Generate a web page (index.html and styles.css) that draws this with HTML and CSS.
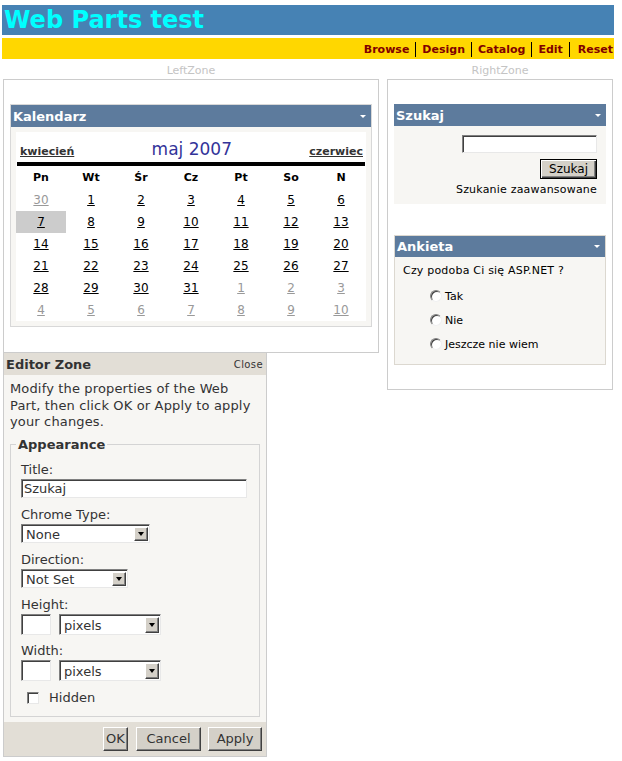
FILE: index.html
```html
<!DOCTYPE html>
<html>
<head>
<meta charset="utf-8">
<title>Web Parts test</title>
<link rel="stylesheet" href="styles.css">
</head>
<body>
<div class="title-bar"><h1>Web Parts test</h1></div>
<div class="menu-bar">
  <nav class="menu"><a>Browse</a><a>Design</a><a>Catalog</a><a>Edit</a><a>Reset</a></nav>
</div>
<div class="main">
  <div class="col-left">
    <div class="zone-label">LeftZone</div>
    <div class="zone">
      <div class="part part-bordered">
        <div class="part-head"><span>Kalendarz</span><span class="arrow"></span></div>
        <div class="cal-body">
          <div class="cal">
            <div class="cal-title"><a>kwiecień</a><span class="cal-month">maj 2007</span><a>czerwiec</a></div>
            <div class="cal-grid">
              <span class="dn">Pn</span><span class="dn">Wt</span><span class="dn">Śr</span><span class="dn">Cz</span><span class="dn">Pt</span><span class="dn">So</span><span class="dn">N</span>
              <a class="d other">30</a><a class="d">1</a><a class="d">2</a><a class="d">3</a><a class="d">4</a><a class="d">5</a><a class="d">6</a>
              <a class="d sel">7</a><a class="d">8</a><a class="d">9</a><a class="d">10</a><a class="d">11</a><a class="d">12</a><a class="d">13</a>
              <a class="d">14</a><a class="d">15</a><a class="d">16</a><a class="d">17</a><a class="d">18</a><a class="d">19</a><a class="d">20</a>
              <a class="d">21</a><a class="d">22</a><a class="d">23</a><a class="d">24</a><a class="d">25</a><a class="d">26</a><a class="d">27</a>
              <a class="d">28</a><a class="d">29</a><a class="d">30</a><a class="d">31</a><a class="d other">1</a><a class="d other">2</a><a class="d other">3</a>
              <a class="d other">4</a><a class="d other">5</a><a class="d other">6</a><a class="d other">7</a><a class="d other">8</a><a class="d other">9</a><a class="d other">10</a>
            </div>
          </div>
        </div>
      </div>
    </div>
    <div class="editor">
      <div class="editor-head"><span class="editor-title">Editor Zone</span><span class="close">Close</span></div>
      <div class="editor-body">
        <p class="desc">Modify the properties of the Web Part, then click OK or Apply to apply your changes.</p>
        <fieldset class="fs">
          <legend>Appearance</legend>
          <div class="field">
            <label>Title:</label>
            <div class="input input-title">Szukaj</div>
          </div>
          <div class="field">
            <label>Chrome Type:</label>
            <div class="select select-chrome"><span class="sel-text">None</span><span class="sel-btn"></span></div>
          </div>
          <div class="field">
            <label>Direction:</label>
            <div class="select select-dir"><span class="sel-text">Not Set</span><span class="sel-btn"></span></div>
          </div>
          <div class="field field-pair">
            <label>Height:</label>
            <div class="pair"><div class="input input-small"></div><div class="select select-unit"><span class="sel-text">pixels</span><span class="sel-btn"></span></div></div>
          </div>
          <div class="field field-pair">
            <label>Width:</label>
            <div class="pair"><div class="input input-small"></div><div class="select select-unit"><span class="sel-text">pixels</span><span class="sel-btn"></span></div></div>
          </div>
          <div class="check-row"><span class="checkbox"></span><span>Hidden</span></div>
        </fieldset>
      </div>
      <div class="editor-foot">
        <button class="btn btn-ok">OK</button><button class="btn btn-cancel">Cancel</button><button class="btn btn-apply">Apply</button>
      </div>
    </div>
  </div>
  <div class="col-right">
    <div class="zone-label">RightZone</div>
    <div class="zone">
      <div class="part">
        <div class="part-head"><span>Szukaj</span><span class="arrow"></span></div>
        <div class="search-body">
          <div class="input input-search"></div>
          <button class="btn btn-default">Szukaj</button>
          <div class="adv">Szukanie zaawansowane</div>
        </div>
      </div>
      <div class="part part-poll">
        <div class="part-head"><span>Ankieta</span><span class="arrow"></span></div>
        <div class="poll-body">
          <div class="question">Czy podoba Ci się ASP.NET ?</div>
          <div class="opt"><span class="radio"></span><span>Tak</span></div>
          <div class="opt"><span class="radio"></span><span>Nie</span></div>
          <div class="opt"><span class="radio"></span><span>Jeszcze nie wiem</span></div>
        </div>
      </div>
    </div>
  </div>
</div>
</body>
</html>
```
FILE: styles.css
```css
* { box-sizing: border-box; }
body {
  margin: 0;
  padding: 5px 8px 0 2px;
  background: #fff;
  font-family: "DejaVu Sans", Verdana, sans-serif;
  color: #000;
}
.title-bar {
  background: #4682B4;
  height: 30px;
  padding-left: 2px;
}
.title-bar h1 {
  margin: 0;
  font-size: 24px;
  line-height: 31px;
  font-weight: bold;
  color: #00FFFF;
}
.menu-bar {
  margin-top: 3px;
  height: 21px;
  background: #FFD700;
  display: flex;
  justify-content: flex-end;
  align-items: center;
  padding-top: 2px;
}
.menu { display: flex; }
.menu a {
  font-size: 11px;
  font-weight: bold;
  color: #800000;
  line-height: 15px;
  padding: 0 6px;
  border-right: 1px solid #000;
}
.menu a:last-child { border-right: none; padding-right: 1px; padding-left: 8px; }

.main { display: flex; gap: 8px; padding-left: 1px; align-items: flex-start; }
.col-left { width: 376px; }
.col-right { width: 226px; }
.zone-label {
  height: 20px;
  padding-top: 5px;
  text-align: center;
  font-size: 11px;
  line-height: 14px;
  color: #c4c4c4;
}
.zone {
  border: 1px solid #cccccc;
  padding: 24px 6px 25px;
}
.col-right .zone { padding-bottom: 24px; }

.part-bordered { border: 1px solid #d8d8d8; }
.part-head {
  height: 22px;
  background: #5D7B9D;
  color: #fff;
  font-size: 13px;
  font-weight: bold;
  display: flex;
  align-items: center;
  justify-content: space-between;
  padding: 0 5px 0 2px;
}
.arrow {
  width: 0; height: 0;
  border-left: 3px solid transparent;
  border-right: 3px solid transparent;
  border-top: 3px solid #fff;
}
.cal-body { background: #F7F6F3; padding: 5px; }
.cal { background: #fff; width: 350px; }
.cal-title {
  margin: 0 1px;
  height: 34px;
  padding: 7px 2px 0 3px;
  border-bottom: 4px solid #000;
  display: flex;
  justify-content: space-between;
  align-items: baseline;
}
.cal-title a {
  font-size: 11px;
  font-weight: bold;
  color: #333;
  text-decoration: underline;
}
.cal-month { font-size: 17px; color: #333399; line-height: 20px; }
.cal-grid {
  display: grid;
  grid-template-columns: repeat(7, 50px);
  grid-template-rows: 23px repeat(6, 22px);
}
.dn {
  font-size: 11px;
  font-weight: bold;
  display: flex; align-items: center; justify-content: center;
}
.d {
  font-size: 12px;
  color: #000;
  text-decoration: underline;
  display: flex; align-items: center; justify-content: center;
}
.d.other { color: #999; }
.d.sel { background: #CCCCCC; }

.editor {
  width: 264px;
  border: 1px solid #cccccc;
  border-top: none;
  color: #333;
}
.editor-head {
  height: 22px;
  background: #E2DED6;
  display: flex;
  justify-content: space-between;
  align-items: center;
  padding: 0 3px 0 2px;
}
.editor-title { font-size: 13px; font-weight: bold; color: #333; }
.close { font-size: 10px; color: #333; letter-spacing: 0.4px; }
.editor-body {
  background: #F7F6F3;
  padding: 6px 6px 5px 6px;
  font-size: 13px;
}
.desc { margin: 0 0 6px; line-height: 16.5px; max-width: 247px; letter-spacing: 0.15px; }
.fs {
  margin: 0;
  border: 1px solid #d4d4d4;
  padding: 10px 10px 10px 10px;
  min-width: 0;
}
.fs legend {
  font-weight: bold;
  font-size: 13px;
  padding: 0 2px;
  margin-left: -5px;
  line-height: 15px;
}
.field { margin-bottom: 9px; }
.field-pair { margin-bottom: 8px; }
.field label { display: block; line-height: 15px; margin-bottom: 2px; }
.input {
  background: #fff;
  border: 1px solid;
  border-color: #808080 #e8e8e8 #e8e8e8 #808080;
  box-shadow: inset 1px 1px 0 #404040;
  font-size: 13px;
  line-height: 17px;
  padding-left: 2px;
}
.input-title { width: 226px; height: 19px; }
.input-small { width: 30px; height: 21px; }
.input-search { width: 135px; height: 18px; margin-left: auto; }
.pair { display: flex; gap: 8px; }
.select {
  background: #fff;
  border: 1px solid;
  border-color: #808080 #e8e8e8 #e8e8e8 #808080;
  box-shadow: inset 1px 1px 0 #404040;
  display: flex;
  align-items: stretch;
  padding: 2px 1px 1px 2px;
}
.sel-text { flex: 1; font-size: 13px; line-height: 15px; padding-left: 2px; }
.sel-btn {
  width: 14px;
  background: #D4D0C8;
  border: 1px solid;
  border-color: #fff #404040 #404040 #fff;
  box-shadow: inset -1px -1px 0 #808080;
  position: relative;
}
.sel-btn::after {
  content: "";
  position: absolute;
  left: 3px; top: 50%;
  margin-top: -2px;
  border-left: 3.5px solid transparent;
  border-right: 3.5px solid transparent;
  border-top: 4px solid #000;
}
.select-chrome { width: 129px; height: 19px; }
.select-dir { width: 107px; height: 19px; }
.select-unit { width: 102px; height: 21px; }
.select-unit .sel-text { line-height: 17px; }
.check-row {
  display: flex;
  align-items: center;
  height: 16px;
  margin-top: 9px;
  padding-left: 6px;
  gap: 10px;
}
.checkbox {
  width: 12px; height: 12px;
  background: #fff;
  border: 1px solid;
  border-color: #808080 #e8e8e8 #e8e8e8 #808080;
  box-shadow: inset 1px 1px 0 #404040;
}
.editor-foot {
  background: #E2DED6;
  height: 34px;
  display: flex;
  justify-content: flex-end;
  padding: 5px 4px 0 0;
  gap: 7px;
}
.btn {
  font-family: "DejaVu Sans", Verdana, sans-serif;
  font-size: 13px;
  color: #333;
  background: #D4D0C8;
  border: 1px solid;
  border-color: #fff #404040 #404040 #fff;
  box-shadow: inset -1px -1px 0 #808080;
  height: 24px;
  padding: 0;
  margin: 0;
}
.btn-ok { width: 25px; margin-right: 1px; }
.btn-cancel { width: 65px; }
.btn-apply { width: 54px; }

.search-body {
  background: #F7F6F3;
  height: 78px;
  padding: 9px 9px 0 0;
  display: flex;
  flex-direction: column;
  align-items: flex-end;
  font-size: 11px;
}
.btn-default {
  width: 57px;
  height: 20px;
  margin-top: 6px;
  border: 1px solid #000;
  box-shadow: inset 1px 1px 0 #fff, inset -1px -1px 0 #404040, inset -2px -2px 0 #808080;
  font-size: 12px;
  color: #000;
}
.adv { margin-top: 4px; line-height: 14px; color: #000; letter-spacing: 0.2px; }

.part-poll { margin-top: 31px; border: 1px solid #dcd8d0; }
.part-poll .part-head { height: 21px; }
.poll-body {
  background: #F7F6F3;
  padding: 7px 8px 8px;
  font-size: 11px;
  color: #000;
}
.question { line-height: 14px; margin-bottom: 6px; letter-spacing: 0.2px; }
.opt {
  height: 24px;
  display: flex;
  align-items: center;
  padding-left: 27px;
  gap: 3px;
}
.radio {
  width: 12px; height: 12px;
  border-radius: 50%;
  background: #fff;
  border: 1px solid;
  border-color: #808080 #f0f0f0 #f0f0f0 #808080;
  box-shadow: inset 1px 1px 0 #404040;
}
```
